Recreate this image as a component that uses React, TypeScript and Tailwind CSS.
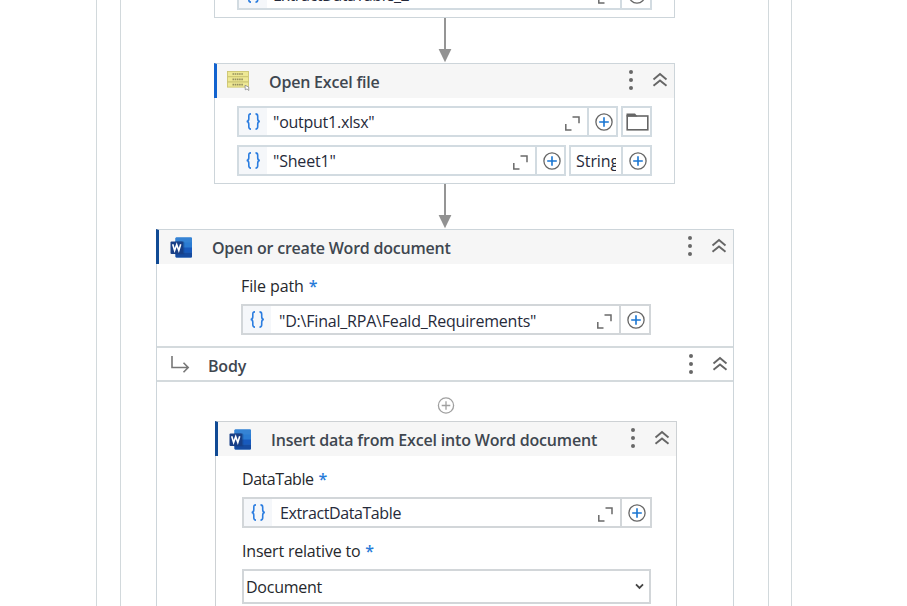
import React from "react";

const BOX = "flex h-[31px] shrink-0 border-2 bg-white";

function Braces() {
  return (
    <div className="flex w-[28px] shrink-0 items-center justify-center bg-[#f5f7fa]">
      <svg width="16" height="20" viewBox="0 0 16 20" fill="none" stroke="#2b7de0" strokeWidth="1.6">
        <path d="M6 1.900C4 1.900 3.800 2.800 3.800 4.200V6.800C3.800 8.500 3.100 9.300 1.700 9.500C3.100 9.700 3.800 10.500 3.800 12.200V14.800C3.800 16.200 4 17.100 6 17.100" />
        <path d="M10.500 1.900C12.500 1.900 12.700 2.800 12.700 4.200V6.800C12.700 8.500 13.400 9.300 14.800 9.500C13.400 9.700 12.700 10.500 12.700 12.200V14.800C12.700 16.200 12.500 17.100 10.500 17.100" />
      </svg>
    </div>
  );
}

function Expand() {
  return (
    <svg className="mr-[7px] mt-[8px] shrink-0" width="15" height="15" viewBox="0 0 15 15" fill="none" stroke="#6a6a6a" strokeWidth="1.5">
      <path d="M7.500 1H14V7.300M.8 8V13.900H6.500" />
    </svg>
  );
}

function Plus() {
  return (
    <div className="flex w-full items-center justify-center pl-[2px]">
      <svg className="shrink-0" width="18" height="18" viewBox="0 0 18 18" fill="none">
        <circle cx="9" cy="9" r="8.100" stroke="#666" strokeWidth="1.300" />
        <path d="M9 4.200V13.800M4.200 9H13.800" stroke="#1a76d2" strokeWidth="1.600" />
      </svg>
    </div>
  );
}

function Field({ text, width, add, textClass, gray = false, pad = "pl-[6px]" }: {
  text: string; width: string; add: string; textClass: string; gray?: boolean; pad?: string;
}) {
  const line = gray ? "border-[#d2d6d9]" : "border-[#d2dbe1]";
  return (
    <div className={`${BOX} ${width} ${line}`}>
      <Braces />
      <div className={`flex min-w-0 flex-1 items-center whitespace-nowrap ${pad} text-[#262a3a]`}>
        <span className={textClass}>{text}</span>
      </div>
      <Expand />
      <div className={`flex shrink-0 border-l-2 ${add} ${line}`}>
        <Plus />
      </div>
    </div>
  );
}

function Controls({ right }: { right: string }) {
  return (
    <div className={`ml-auto flex items-start ${right}`}>
      <svg width="6" height="22" viewBox="0 0 6 22" fill="#686868">
        <circle cx="3" cy="3" r="2" />
        <circle cx="3" cy="11" r="2" />
        <circle cx="3" cy="19" r="2" />
      </svg>
      <svg className="ml-[18px] mt-[3px]" width="16" height="15" viewBox="0 0 16 15" fill="none" stroke="#666" strokeWidth="1.900">
        <path d="M1.500 7.500L8 2.100L14.500 7.500M1.500 13.800L8 8.400L14.500 13.800" />
      </svg>
    </div>
  );
}

function WordIcon() {
  return (
    <svg width="22" height="21" viewBox="0 0 22 21" className="shrink-0">
      <rect x="5.500" y="0.500" width="16.500" height="20" rx="1" fill="#2b7cd3" />
      <rect x="5.500" y="0.500" width="16.500" height="5" rx="1" fill="#3583d4" />
      <rect x="5.500" y="10.500" width="16.500" height="5" fill="#185abd" />
      <path d="M5.500 15.500H22V19.500A1 1 0 0 1 21 20.500H6.500A1 1 0 0 1 5.500 19.500Z" fill="#164ba0" />
      <path d="M5.500 4.500H13A1.300 1.300 0 0 1 14.300 5.800V17.500H5.500Z" fill="#153f80" opacity=".55" />
      <rect x="0.500" y="4.500" width="12.500" height="12.500" rx="1" fill="#183f86" />
      <path d="M2.700 7.300L4.600 13.500L6.700 7.700L8.800 13.500L10.700 7.300" fill="none" stroke="#fff" strokeWidth="1.600" />
    </svg>
  );
}

function StackIcon() {
  return (
    <svg width="23" height="21" viewBox="0 0 23 21" className="shrink-0">
      {[0, 1, 2].map((i) => (
        <g key={i} transform={`translate(0 ${i * 5.300})`}>
          <rect x=".5" y=".5" width="21" height="5" fill="#eee894" stroke="#cdc570" strokeWidth=".9" />
          <path d="M5.500 3H16" stroke="#96905f" strokeWidth="1.700" strokeDasharray="1.600 .6" />
        </g>
      ))}
      <path d="M18 14.300L18.300 18.800L20 17.900L21.800 19.500L21.700 16Z" fill="#fff" stroke="#888" strokeWidth=".8" />
    </svg>
  );
}

function Arrow({ height }: { height: string }) {
  return (
    <div className={`flex flex-col items-center pl-[1px] ${height}`}>
      <div className="w-[2px] flex-1 bg-[#959595]" />
      <svg width="14" height="14" viewBox="0 0 14 14" className="shrink-0">
        <path d="M.6 0H13.400L7 13.200Z" fill="#929292" />
      </svg>
    </div>
  );
}

function Label({ text, textClass }: { text: string; textClass: string }) {
  return (
    <div className="flex h-[22px] items-center gap-[5px] whitespace-nowrap text-[#26282c]">
      <span className={textClass}>{text}</span>
      <span className="font-semibold text-[#287bd8]">*</span>
    </div>
  );
}

export default function App() {
  return (
    <div className="h-[606px] w-[907px] overflow-hidden bg-white font-['Open_Sans','Noto_Sans',sans-serif] text-[16px] leading-[22px]">
      <div className="ml-[96px] h-full w-[696px] border-x border-[#d2d9dc] px-[23px]">
        <div className="h-full w-[649px] border-x border-[#d2d9dc]">
          {/* Preceding activity, cut by the viewport's top edge */}
          <div className="ml-[93px] flex h-[18px] w-[461px] flex-col justify-end overflow-hidden border-x border-b border-[#cdd5da] pb-[7px] pl-[22px]">
            <Field text="ExtractDataTable_2" width="w-[415px]" add="w-[30px]" textClass="tracking-[-0.4px]" />
          </div>
          <div className="ml-[93px] w-[461px]"><Arrow height="h-[45px]" /></div>

          <div className="ml-[93px] h-[121px] w-[461px] border border-[#cdd5da]">
            <div className="-ml-px -mt-px flex h-[35px] border-l-[3px] border-t border-l-[#1263cf] border-t-[#cdd5da] bg-[#f6f6f6]">
              <div className="ml-[10px] mt-[7px]"><StackIcon /></div>
              <span className="ml-[19px] mt-[7px] whitespace-nowrap font-semibold tracking-[-0.2px] text-[#3f4750]">Open Excel file</span>
              <div className="ml-auto mt-[5px]"><Controls right="mr-[6px]" /></div>
            </div>
            <div className="ml-[22px] mt-[8px] flex gap-[3px]">
              <Field text={'"output1.xlsx"'} width="w-[381px]" add="w-[29px]" textClass="tracking-[-0.25px]" />
              <div className="flex h-[31px] w-[31px] items-center justify-center border-2 border-[#d2dbe1] pl-[1px]">
                <svg className="shrink-0" width="23" height="18" viewBox="0 0 23 18">
                  <path d="M.5 3.500V.500H9L11.500 3.500Z" fill="#666" />
                  <rect x="1.200" y="3" width="20.600" height="13.800" fill="none" stroke="#666" strokeWidth="1.600" />
                </svg>
              </div>
            </div>
            <div className="ml-[22px] mt-[8px] flex gap-[3px]">
              <Field text={'"Sheet1"'} width="w-[329px]" add="w-[29px]" textClass="tracking-[-0.2px]" />
              <div className="flex h-[31px] w-[83px] border-2 border-[#d2dbe1]">
                <div className="ml-[5px] flex w-[40px] shrink-0 items-center overflow-hidden whitespace-nowrap text-[#262a3a]">
                  <span className="tracking-[-0.05px]">String</span>
                </div>
                <div className="ml-[5px] flex flex-1 border-l-2 border-[#d2dbe1]"><Plus /></div>
              </div>
            </div>
          </div>
          <div className="ml-[93px] w-[461px]"><Arrow height="h-[45px]" /></div>

          <div className="ml-[35px] h-[390px] w-[578px] border border-[#cdd5da]">
            <div className="-ml-px -mt-px flex h-[35px] border-l-[3px] border-t border-l-[#104a94] border-t-[#cdd5da] bg-[#f6f6f6]">
              <div className="ml-[11px] mt-[7px]"><WordIcon /></div>
              <span className="ml-[20px] mt-[7px] whitespace-nowrap font-semibold tracking-[-0.22px] text-[#3f4750]">Open or create Word document</span>
              <div className="ml-auto mt-[5px]"><Controls right="mr-[6px]" /></div>
            </div>
            <div className="ml-[84px] mt-[11px]">
              <Label text="File path" textClass="tracking-[-0.1px]" />
              <div className="mt-[7px]">
                <Field gray text={'"D:\\Final_RPA\\Feald_Requirements"'} width="w-[410px]" add="w-[30px]" pad="pl-[8px] pt-[2px]" textClass="tracking-[-0.2px]" />
              </div>
            </div>
            <div className="mt-[11px] flex h-[36px] border-y-[2px] border-[#d4dadd]">
              <svg className="ml-[14px] mt-[8px]" width="19" height="18" viewBox="0 0 19 18" fill="none" stroke="#777" strokeWidth="1.600">
                <path d="M1 0V11.500H17M12.500 6.800L17.200 11.500L12.500 16.200" />
              </svg>
              <span className="ml-[18px] mt-[7px] font-semibold tracking-[-0.2px] text-[#3f4750]">Body</span>
              <div className="ml-auto mt-[5px]"><Controls right="mr-[5px]" /></div>
            </div>
            <svg className="ml-[280px] mt-[15px]" width="18" height="18" viewBox="0 0 18 18" fill="none" stroke="#a0a0a0" strokeWidth="1.300">
              <circle cx="9" cy="8.500" r="7.600" />
              <path d="M9 4.200V12.800M4.700 8.500H13.300" />
            </svg>

            <div className="ml-[58px] mt-[6px] h-[200px] w-[462px] border border-[#cdd1d4]">
              <div className="-ml-px -mt-px flex h-[35px] border-l-[3px] border-t border-l-[#104a94] border-t-[#cdd1d4] bg-[#f6f6f6]">
                <div className="ml-[11px] mt-[7px]"><WordIcon /></div>
                <span className="ml-[20px] mt-[7px] whitespace-nowrap font-semibold tracking-[-0.18px] text-[#3f4750]">Insert data from Excel into Word document</span>
                <div className="ml-auto mt-[5px]"><Controls right="mr-[6px]" /></div>
              </div>
              <div className="ml-[26px] mt-[12px]">
                <Label text="DataTable" textClass="tracking-[-0.45px]" />
                <div className="mt-[7px]">
                  <Field gray text="ExtractDataTable" width="w-[410px]" add="w-[30px]" pad="pl-[8px]" textClass="tracking-[-0.4px]" />
                </div>
                <div className="mt-[12px]"><Label text="Insert relative to" textClass="tracking-[-0.2px]" /></div>
                <div className="mt-[7px] flex h-[35px] w-[409px] items-center justify-between border-2 border-[#d2d6d9] pl-[2px] pr-[5px] text-[#26282c]">
                  <span className="tracking-[-0.25px]">Document</span>
                  <svg width="9" height="7" viewBox="0 0 9 7" fill="none" stroke="#444" strokeWidth="1.800">
                    <path d="M1 1.300L4.500 4.900L8 1.300" />
                  </svg>
                </div>
              </div>
            </div>
          </div>
        </div>
      </div>
    </div>
  );
}
